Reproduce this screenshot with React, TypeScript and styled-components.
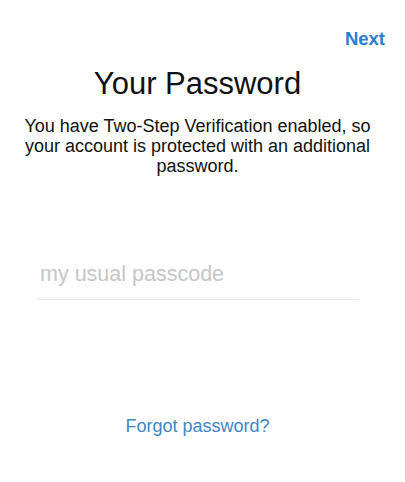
import React from 'react';
import { styled, createGlobalStyle } from 'styled-components';

const GlobalStyle = createGlobalStyle`
    html, body {
        margin: 0;
        padding: 0;
        background: #ffffff;
    }
    body {
        font-family: "Liberation Sans", Arial, sans-serif;
        -webkit-font-smoothing: antialiased;
    }
`;

const App: React.FC = () => {
    return (
        <>
            <GlobalStyle />
            <Screen>
                <NavBar>
                    <NavButton type="button">Next</NavButton>
                </NavBar>
                <Title>Your Password</Title>
                <Description>
                    You have Two-Step Verification enabled, so your account is protected with an additional password.
                </Description>
                <Field>
                    <PasswordInput type="password" placeholder="my usual passcode" />
                </Field>
                <ForgotLink type="button">Forgot password?</ForgotLink>
            </Screen>
        </>
    );
};

const Screen = styled.div`
    width: 405px;
    height: 482px;
    display: flex;
    flex-direction: column;
    align-items: center;
    box-sizing: border-box;
    padding-right: 10px;
    overflow: hidden;
`;

const NavBar = styled.div`
    align-self: stretch;
    display: flex;
    justify-content: flex-end;
    padding: 28px 10px 0 0;
    height: 22px;
`;

const NavButton = styled.button`
    border: none;
    background: none;
    padding: 0;
    font-family: "Liberation Sans", Arial, sans-serif;
    font-size: 18.5px;
    font-weight: 700;
    color: #2a7dd1;
    line-height: 22px;
`;

const Title = styled.h1`
    margin: 16px 0 0;
    font-size: 31px;
    font-weight: 400;
    color: #111111;
    line-height: 36px;
`;

const Description = styled.p`
    margin: 14px 0 0;
    width: 360px;
    text-align: center;
    font-size: 18px;
    line-height: 20px;
    color: #111111;
`;

const Field = styled.div`
    margin-top: 85px;
    width: 323px;
    border-bottom: 1px solid #e8e8e8;
    padding-bottom: 12px;
`;

const PasswordInput = styled.input`
    border: none;
    outline: none;
    background: none;
    width: 100%;
    padding: 0 0 0 4px;
    margin: 0;
    font-family: "Liberation Sans", Arial, sans-serif;
    font-size: 21.5px;
    line-height: 26px;
    height: 26px;
    color: #111111;

    &::placeholder {
        color: #c6c6c8;
    }
`;

const ForgotLink = styled.button`
    margin-top: 116px;
    border: none;
    background: none;
    padding: 0;
    font-family: "Liberation Sans", Arial, sans-serif;
    font-size: 18px;
    line-height: 20px;
    color: #3d86c8;
`;

export default App;
